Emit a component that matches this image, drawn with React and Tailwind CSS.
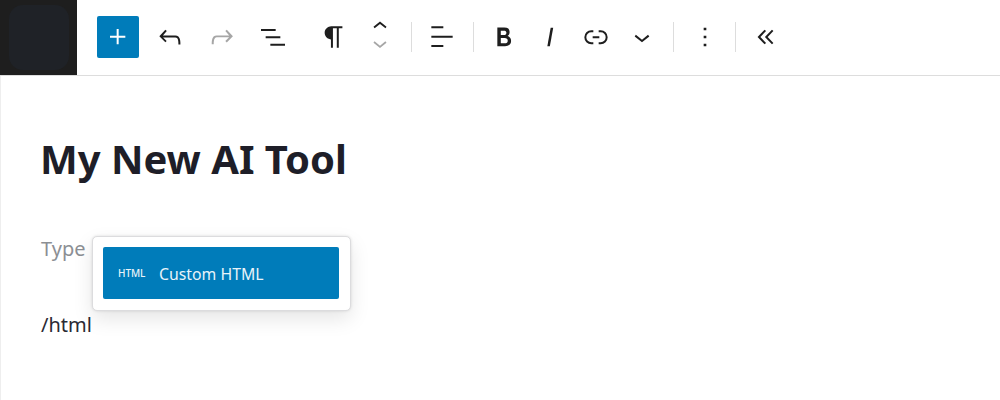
const Ic = ({ d, c = "#1e1e1e", w = "w-[52px]", s = 32 }) => (
  <button className={`${w} h-[41px] flex items-center justify-center shrink-0`}>
    <svg width={s} height={s} viewBox="0 0 24 24" fill={c}><path d={d} /></svg>
  </button>
);
const Div = ({ cls }) => <div className={`w-px h-[30px] bg-[#dddddd] shrink-0 ${cls}`} />;
const chevDown = "M17.5 11.6L12 16l-5.5-4.4.9-1.2L12 14l4.5-3.6 1 1.2z";
const chevUp = "M6.5 12.4L12 8l5.5 4.4-.9 1.2L12 10l-4.5 3.6-1-1.2z";

export default function App() {
  return (
    <div className="w-[1000px] h-[400px] bg-white overflow-hidden relative text-[#1e1e1e]" style={{ fontFamily: '"Noto Sans", "Open Sans", sans-serif' }}>
      <header className="h-[76px] flex items-center border-b border-[#dddddd] pb-px">
        <div className="w-[77px] h-[75px] -mb-px bg-[#1e1e1e] flex items-center justify-center shrink-0">
          <div className="w-[60px] h-[65px] rounded-[14px] bg-[#1f2227]" />
        </div>
        <button className="ml-[20px] w-[42px] h-[42px] rounded-[2px] bg-[#007cba] flex items-center justify-center shrink-0">
          <svg width="32" height="32" viewBox="0 0 24 24" fill="#fff"><path d="M11 12.5V17.5H12.5V12.5H17.5V11H12.5V6H11V11H6V12.5H11Z" /></svg>
        </button>
        <div className="ml-[5px] flex items-center">
          <Ic d="M18.3 11.7c-.6-.6-1.4-.9-2.3-.9H6.7l2.9-3.3-1.1-1-4.5 5L8.5 16l1-1-2.7-2.7H16c.5 0 .9.2 1.3.5 1 1 1 3.4 1 4.5v.3h1.5v-.2c0-1.5 0-4.3-1.5-5.7z" />
          <Ic w="w-[51px]" c="#a6a6a6" d="M15.6 6.5l-1.1 1 2.9 3.3H8c-.9 0-1.7.3-2.3.9-1.4 1.5-1.4 4.2-1.4 5.6v.2h1.5v-.3c0-1.1 0-3.5 1-4.5.3-.3.7-.5 1.3-.5h9.2L14.5 15l1.1 1.1 4.6-4.6-4.6-5z" />
          <Ic w="w-[51px]" d="M3 6h11v1.5H3V6Zm3.5 5.5h11V13h-11v-1.5ZM21 17H10v1.5h11V17Z" />
        </div>
        <div className="ml-[11px]">
          <Ic w="w-[50px]" d="M18.3 4H9.9v-.1l-.9.2c-2.3.4-4 2.4-4 4.8s1.7 4.4 4 4.8l.7.1V20h1.5V5.5h2.9V20h1.5V5.5h2.7V4z" />
        </div>
        <div className="ml-[9px] w-[24px] h-[41px] flex flex-col items-center justify-center shrink-0">
          <svg width="32" height="32" viewBox="0 0 24 24" fill="#1e1e1e" className="-mb-[11px] -mt-[5px]"><path d={chevUp} /></svg>
          <svg width="32" height="32" viewBox="0 0 24 24" fill="#a6a6a6"><path d={chevDown} /></svg>
        </div>
        <Div cls="ml-[19px]" />
        <Ic w="w-[60px]" d="M13 5.5H4V4h9v1.5Zm7 7H4V11h16v1.5Zm-7 7H4V18h9v1.5Z" />
        <Div cls="ml-px" />
        <div className="ml-[7px] flex items-center">
          <Ic w="w-[46px]" d="M14.7 11.3c1-.6 1.5-1.6 1.5-3 0-2.3-1.3-3.4-4-3.4H7v14h5.8c1.4 0 2.5-.3 3.3-1 .8-.7 1.2-1.7 1.2-2.9.1-1.9-.8-3.1-2.6-3.7zm-5.1-4h2.3c.6 0 1.1.1 1.4.4.3.3.5.7.5 1.2s-.2 1-.5 1.2c-.3.3-.8.4-1.4.4H9.6V7.3zm4.6 9c-.4.3-1 .4-1.7.4H9.6v-3.9h2.9c.7 0 1.3.2 1.7.5.4.3.6.8.6 1.5s-.2 1.2-.6 1.5z" />
          <Ic w="w-[46px]" d="M12.5 5L10 19h1.9l2.5-14z" />
          <Ic w="w-[46px]" d="M10 17.389H8.444A5.194 5.194 0 1 1 8.444 7H10v1.5H8.444a3.694 3.694 0 0 0 0 7.389H10v1.5ZM14 7h1.556a5.194 5.194 0 0 1 0 10.39H14v-1.5h1.556a3.694 3.694 0 0 0 0-7.39H14V7Zm-4.5 6h5v-1.5h-5V13Z" />
          <Ic w="w-[46px]" d={chevDown} />
        </div>
        <Div cls="ml-[8px]" />
        <Ic w="w-[61px]" d="M13 19h-2v-2h2v2zm0-6h-2v-2h2v2zm0-6h-2V5h2v2z" />
        <Div />
        <button className="w-[60px] h-[41px] flex items-center justify-center shrink-0">
          <svg width="32" height="32" viewBox="0 0 24 24" fill="none" stroke="#1e1e1e" strokeWidth="1.5">
            <path d="M11.5 7 6.7 12l4.8 5M17 7l-4.8 5 4.8 5" />
          </svg>
        </button>
      </header>
      <main className="h-[324px] border-l border-[#eeeeee] pl-[40px] pt-[56px] relative">
        <h1 className="-ml-px text-[40px] leading-[54px] font-bold text-[#1e1e28]">My New AI Tool</h1>
        <p className="mt-[48px] text-[20px] leading-[30px] text-[#8c8f94]">Type</p>
        <p className="mt-[46px] text-[20px] leading-[30px] text-[#2a2a33]">/html</p>
        <div className="absolute left-[91px] top-[160px] w-[259px] h-[75px] bg-white border border-[#dcdcde] rounded-[5px] pl-[10px] pr-[10px] py-[10px] shadow-[0_0_3px_rgba(0,0,0,0.12),0_8px_20px_rgba(0,0,0,0.1)]">
          <div className="h-[52px] w-[236px] rounded-[2px] bg-[#007cba] flex items-center pl-[15px] text-white">
            <span className="w-[41px] text-[10px] font-medium leading-none -mt-[1px] tracking-[-0.1px] text-[#e8f3f9]">HTML</span>
            <span className="text-[15.8px] mt-[3px] text-[#e8f3f9]">Custom HTML</span>
          </div>
        </div>
      </main>
    </div>
  );
}
